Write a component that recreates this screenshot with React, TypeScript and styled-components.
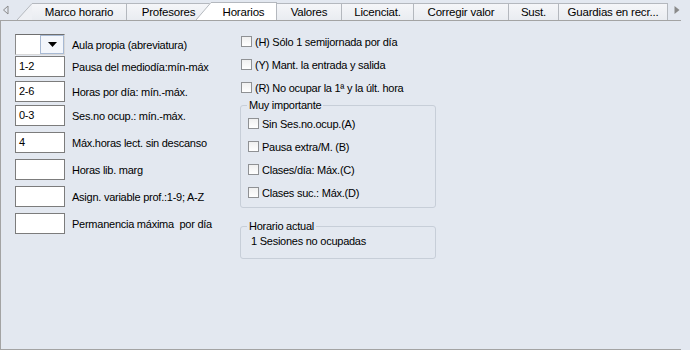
import React from 'react';
import styled, { createGlobalStyle } from 'styled-components';

const GlobalStyle = createGlobalStyle`
  html, body {
    margin: 0;
    padding: 0;
    background: #e3e8f0;
  }
  body {
    font-family: 'Liberation Sans', Arial, sans-serif;
    font-size: 11px;
    letter-spacing: -0.25px;
    color: #000;
  }
`;

const tabs = [
  { label: 'Marco horario', width: 95, slant: true },
  { label: 'Profesores', width: 84 },
  { label: 'Horarios', width: 66, slant: true, active: true },
  { label: 'Valores', width: 65 },
  { label: 'Licenciat.', width: 72 },
  { label: 'Corregir valor', width: 95 },
  { label: 'Sust.', width: 50 },
  { label: 'Guardias en recr...', width: 109 }
];

const fields = [
  { value: '1-2', label: 'Pausa del mediodía:mín-máx', mt: 1 },
  { value: '2-6', label: 'Horas por día: mín.-máx.', mt: 4 },
  { value: '0-3', label: 'Ses.no ocup.: mín.-máx.', mt: 3 },
  { value: '4', label: 'Máx.horas lect. sin descanso', mt: 6 },
  { value: '', label: 'Horas lib. marg', mt: 6 },
  { value: '', label: 'Asign. variable prof.:1-9; A-Z', mt: 6 },
  { value: '', label: 'Permanencia máxima  por día', mt: 6 }
];

const options = [
  '(H) Sólo 1 semijornada por día',
  '(Y) Mant. la entrada y salida',
  '(R) No ocupar la 1ª y la últ. hora'
];

const important = [
  'Sin Ses.no.ocup.(A)',
  'Pausa extra/M. (B)',
  'Clases/día: Máx.(C)',
  'Clases suc.: Máx.(D)'
];

function TabSlant({ active }: { active?: boolean }) {
  const h = active ? 18 : 17;
  return (
    <SlantSvg width={15} height={h} viewBox={`0 0 15 ${h}`} $active={active}>
      <polygon points={`0,${h} 15,0 15,${h}`} fill={active ? '#ffffff' : '#eef0f4'} />
      <line x1={0} y1={h} x2={15} y2={0.5} stroke='#b4b8be' strokeWidth={1} />
    </SlantSvg>
  );
}

function App() {
  return (
    <Window>
      <GlobalStyle />
      <TabStrip>
        <ScrollArrow>
          <svg width='7' height='10' viewBox='0 0 7 10'>
            <polygon points='6,1 1.5,5 6,9' fill='none' stroke='#8a8a8a' />
          </svg>
        </ScrollArrow>
        {tabs.map((t) => (
          <React.Fragment key={t.label}>
            {t.slant && <TabSlant active={t.active} />}
            <Tab $width={t.width} $active={t.active}>
              {t.label}
            </Tab>
          </React.Fragment>
        ))}
        <NextArrow>
          <svg width='6' height='10' viewBox='0 0 6 10'>
            <polygon points='0.5,1 5.5,5 0.5,9' fill='#8a8a8a' />
          </svg>
        </NextArrow>
      </TabStrip>
      <Panel>
        <LeftColumn>
          <FieldRow $mt={0}>
            <Combo>
              <ComboField />
              <DropButton>
                <svg width='9' height='5' viewBox='0 0 9 5'>
                  <polygon points='0,0 9,0 4.5,5' fill='#000' />
                </svg>
              </DropButton>
            </Combo>
            <Label>Aula propia (abreviatura)</Label>
          </FieldRow>
          {fields.map((f) => (
            <FieldRow key={f.label} $mt={f.mt}>
              <TextBox>{f.value}</TextBox>
              <Label>{f.label}</Label>
            </FieldRow>
          ))}
        </LeftColumn>
        <RightColumn>
          {options.map((o) => (
            <CheckRow key={o}>
              <Check />
              <span>{o}</span>
            </CheckRow>
          ))}
          <Group>
            <Legend>Muy importante</Legend>
            {important.map((o) => (
              <CheckRow key={o}>
                <Check />
                <span>{o}</span>
              </CheckRow>
            ))}
          </Group>
          <Group $mt={12} $pb={10}>
            <Legend>Horario actual</Legend>
            <InfoText>1 Sesiones no ocupadas</InfoText>
          </Group>
        </RightColumn>
      </Panel>
    </Window>
  );
}
export default App;

const Window = styled.div`
  width: 690px;
  height: 350px;
  background: #e3e8f0;
  overflow: hidden;
`;

const TabStrip = styled.div`
  display: flex;
  align-items: flex-end;
  height: 20px;
`;

const ScrollArrow = styled.div`
  width: 17px;
  height: 20px;
  display: flex;
  align-items: center;
  padding-left: 2px;
  box-sizing: border-box;
`;

const NextArrow = styled.div`
  height: 20px;
  display: flex;
  align-items: center;
  margin-left: 6px;
`;

const SlantSvg = styled.svg<{ $active?: boolean }>`
  display: block;
  flex: none;
  margin-left: ${(props) => (props.$active ? '-15px' : '0')};
`;

const Tab = styled.div<{ $width: number; $active?: boolean }>`
  flex: none;
  width: ${(props) => props.$width}px;
  height: ${(props) => (props.$active ? 18 : 17)}px;
  box-sizing: border-box;
  display: flex;
  align-items: center;
  justify-content: center;
  border-top: 1px solid #b4b8be;
  border-right: 1px solid #b4b8be;
  background: ${(props) =>
    props.$active ? '#ffffff' : 'linear-gradient(#f5f6f9, #e9ecf1)'};
  font-size: 11.5px;
  letter-spacing: -0.2px;
  white-space: nowrap;
  overflow: hidden;
`;

const Panel = styled.div`
  width: 681px;
  height: 330px;
  box-sizing: border-box;
  border-top: 1px solid #a3a3a3;
  border-left: 1px solid #a3a3a3;
  border-bottom: 1px solid #a3a3a3;
  display: flex;
  padding: 13px 0 0 14px;
`;

const LeftColumn = styled.div`
  width: 225px;
  display: flex;
  flex-direction: column;
`;

const FieldRow = styled.div<{ $mt: number }>`
  display: flex;
  align-items: center;
  gap: 7px;
  height: 21px;
  margin-top: ${(props) => props.$mt}px;
`;

const Combo = styled.div`
  display: flex;
  width: 50px;
  height: 21px;
  box-sizing: border-box;
  border-top: 1px solid #6f6f6f;
  border-left: 1px solid #8a8a8a;
  border-right: 1px solid #d8d8d8;
  border-bottom: 1px solid #d8d8d8;
  background: #fff;
`;

const ComboField = styled.div`
  flex: 1;
`;

const DropButton = styled.div`
  width: 24px;
  box-sizing: border-box;
  display: flex;
  align-items: center;
  justify-content: center;
  border: 1px solid #a7b9d3;
  background: #f3f6fb;
`;

const TextBox = styled.div`
  flex: none;
  width: 50px;
  height: 21px;
  box-sizing: border-box;
  border: 1px solid #7c7c7c;
  background: #fff;
  padding: 2px 3px;
  line-height: 14px;
`;

const Label = styled.span`
  white-space: pre;
`;

const RightColumn = styled.div`
  width: 196px;
  display: flex;
  flex-direction: column;
  margin-top: -4px;
`;

const CheckRow = styled.div`
  display: flex;
  align-items: center;
  gap: 3px;
  height: 23px;
  white-space: nowrap;
`;

const Check = styled.span`
  flex: none;
  width: 11px;
  height: 11px;
  box-sizing: border-box;
  margin-left: 1px;
  border: 1px solid #8f9194;
  background: linear-gradient(#f0f0f0, #ffffff);
`;

const Group = styled.fieldset<{ $mt?: number; $pb?: number }>`
  margin: ${(props) => props.$mt || 0}px 0 0 0;
  padding: 0 6px ${(props) => (props.$pb === undefined ? 3 : props.$pb)}px 6px;
  width: 196px;
  box-sizing: border-box;
  border: 1px solid #c7ced8;
  border-radius: 3px;
  min-width: 0;
`;

const Legend = styled.legend`
  padding: 0 2px;
  line-height: 13px;
`;

const InfoText = styled.div`
  padding: 2px 0 0 4px;
  line-height: 13px;
`;
